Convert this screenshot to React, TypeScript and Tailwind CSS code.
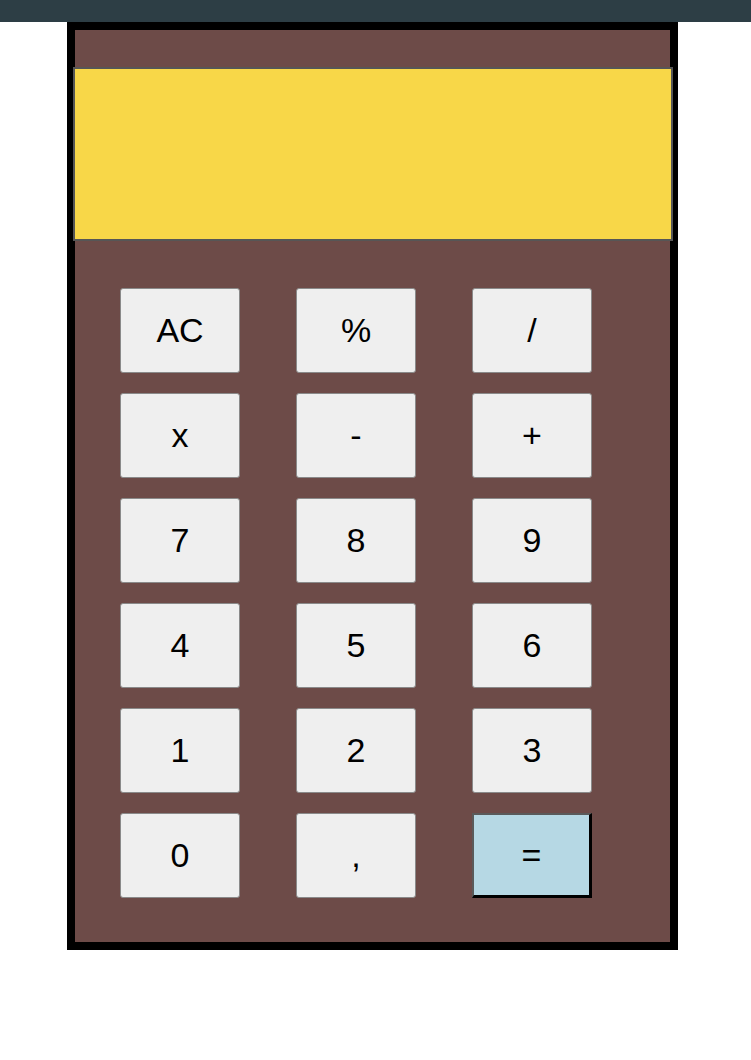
import React, { useState } from 'react';

const keys = ['AC', '%', '/', 'x', '-', '+', '7', '8', '9', '4', '5', '6', '1', '2', '3', '0', ',', '='];

const App: React.FC = () => {
  const [display, setDisplay] = useState('');

  const handleClick = (key: string) => {
    if (key === 'AC') {
      setDisplay('');
      return;
    }
    if (key === '=') return;
    setDisplay(display + key);
  };

  return (
    <div className="min-h-[1060px] bg-white font-['Liberation_Sans',Arial,sans-serif]">
      <div className="h-[22px] bg-[#2d3e45]" />
      <div className="ml-[67px] w-[611px] border-8 border-black bg-[#6d4b48] pt-[37px] pb-[44px]">
        <div className="-ml-[2px] flex h-[174px] w-[600px] items-center justify-end border-2 border-[#565656] bg-[#f8d748] px-4 text-[40px] text-black">
          {display}
        </div>
        <div className="mt-[47px] grid grid-cols-[120px_120px_120px] gap-x-[56px] gap-y-[20px] pl-[45px]">
          {keys.map((key) => (
            <button
              key={key}
              type="button"
              onClick={() => handleClick(key)}
              className={
                key === '='
                  ? 'flex h-[85px] items-center justify-center border-2 border-t-[#5a5a5a] border-l-[#5a5a5a] border-r-[3px] border-r-black border-b-[3px] border-b-black bg-[#b6d8e4] text-[34px] text-black'
                  : 'flex h-[85px] items-center justify-center rounded-[3px] border border-[#8a8a8a] bg-[#efefef] text-[34px] text-black'
              }
            >
              {key}
            </button>
          ))}
        </div>
      </div>
    </div>
  );
};

export default App;
